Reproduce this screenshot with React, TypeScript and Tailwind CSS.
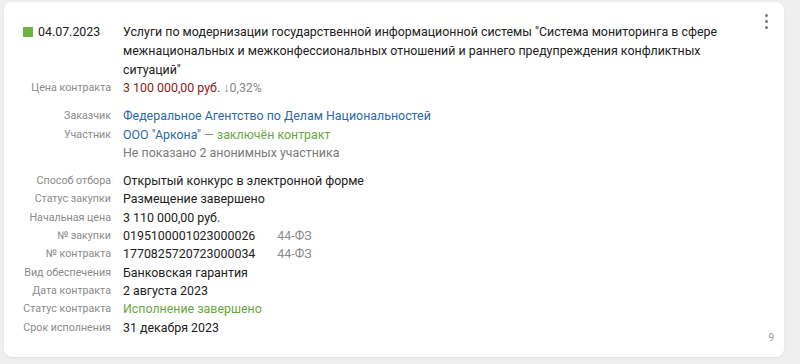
const Row: React.FC<{ label: string; children: React.ReactNode }> = ({ label, children }) => (
  <>
    <div className="text-right text-[10.7px] leading-[18.3px] text-[#8a8a8a] whitespace-nowrap">{label}</div>
    <div className="text-[12.4px] leading-[18.3px] text-[#222] whitespace-nowrap">{children}</div>
  </>
);

const App: React.FC = () => {
  return (
    <div className="w-[800px] h-[364px] bg-[#efefef] pl-[4px] pt-[2px]" style={{ fontFamily: "Roboto, 'Noto Sans', sans-serif" }}>
      <div className="relative w-[780px] h-[355px] rounded-lg bg-white shadow-[0_1px_2px_rgba(0,0,0,0.08)] pl-[19px] pt-[20px]">
        <div className="grid grid-cols-[88px_610px] gap-x-[12px] leading-[19px]">
          <div className="flex items-center gap-[5px] h-[19px] text-[12.4px] text-[#222] whitespace-nowrap">
            <span className="inline-block w-[10px] h-[10px] bg-[#6db33f]" />
            04.07.2023
          </div>
          <div className="text-[12.4px] text-[#222]">
            Услуги по модернизации государственной информационной системы "Система мониторинга в сфере межнациональных и межконфессиональных отношений и раннего предупреждения конфликтных ситуаций"
          </div>
        </div>

        <div className="grid grid-cols-[88px_1fr] gap-x-[12px] items-center">
          <Row label="Цена контракта">
            <span className="text-[#8e1a1a]">3 100 000,00 руб.</span>{" "}
            <span className="text-[#8a8a8a]">↓0,32%</span>
          </Row>
          <div className="col-span-2 h-[10px]" />
          <Row label="Заказчик">
            <span className="text-[#2c6aa6]">Федеральное Агентство по Делам Национальностей</span>
          </Row>
          <Row label="Участник">
            <span className="text-[#2c6aa6]">ООО "Аркона"</span>{" "}
            <span className="text-[#6aa63f]">— заключён контракт</span>
          </Row>
          <div />
          <div className="text-[12.4px] leading-[18.3px] text-[#7a7a7a]">Не показано 2 анонимных участника</div>
          <div className="col-span-2 h-[10px]" />
          <Row label="Способ отбора">Открытый конкурс в электронной форме</Row>
          <Row label="Статус закупки">Размещение завершено</Row>
          <Row label="Начальная цена">3 110 000,00 руб.</Row>
          <Row label="№ закупки">
            0195100001023000026<span className="ml-[22px] text-[#8a8a8a]">44-ФЗ</span>
          </Row>
          <Row label="№ контракта">
            1770825720723000034<span className="ml-[22px] text-[#8a8a8a]">44-ФЗ</span>
          </Row>
          <Row label="Вид обеспечения">Банковская гарантия</Row>
          <Row label="Дата контракта">2 августа 2023</Row>
          <Row label="Статус контракта">
            <span className="text-[#6aa63f]">Исполнение завершено</span>
          </Row>
          <Row label="Срок исполнения">31 декабря 2023</Row>
        </div>

        <div className="absolute right-[16px] top-[12px] flex flex-col gap-[3px]">
          <span className="w-[3px] h-[3px] rounded-full bg-[#777]" />
          <span className="w-[3px] h-[3px] rounded-full bg-[#777]" />
          <span className="w-[3px] h-[3px] rounded-full bg-[#777]" />
        </div>
        <div className="absolute right-[10px] bottom-[12px] text-[10px] text-[#999]">9</div>
      </div>
    </div>
  );
};

export default App;
